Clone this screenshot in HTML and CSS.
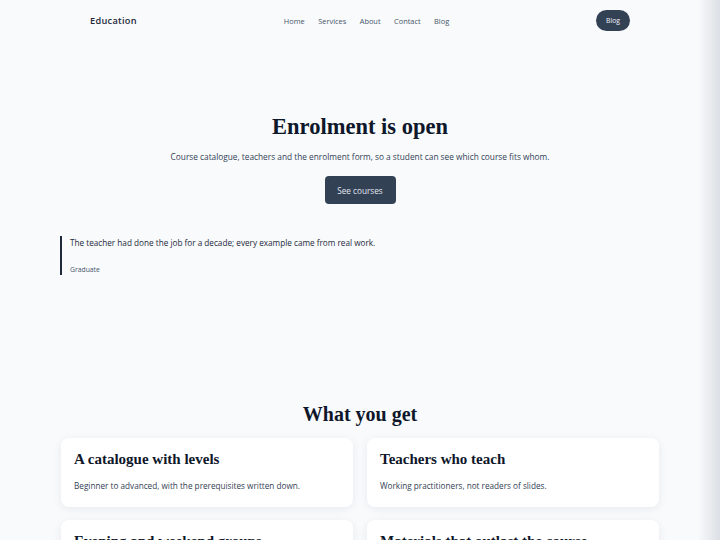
FILE: index.html
```html
<!DOCTYPE html>
<html lang="en">
<head>
<meta charset="utf-8">
<title>Education</title>
<link rel="stylesheet" href="styles.css">
</head>
<body>
<header class="topbar">
  <div class="brand">Education</div>
  <nav class="links">
    <a href="#">Home</a>
    <a href="#">Services</a>
    <a href="#">About</a>
    <a href="#">Contact</a>
    <a href="#">Blog</a>
  </nav>
  <a class="pill" href="#">Blog</a>
</header>

<main>
  <section class="hero">
    <h1>Enrolment is open</h1>
    <p class="lead">Course catalogue, teachers and the enrolment form, so a student can see which course fits whom.</p>
    <a class="btn" href="#">See courses</a>
  </section>

  <section class="wrap">
    <blockquote class="quote">
      <p>The teacher had done the job for a decade; every example came from real work.</p>
      <cite>Graduate</cite>
    </blockquote>
  </section>

  <section class="wrap features">
    <h2>What you get</h2>
    <div class="grid">
      <div class="card">
        <h3>A catalogue with levels</h3>
        <p>Beginner to advanced, with the prerequisites written down.</p>
      </div>
      <div class="card">
        <h3>Teachers who teach</h3>
        <p>Working practitioners, not readers of slides.</p>
      </div>
      <div class="card">
        <h3>Evening and weekend groups</h3>
        <p>Schedules that fit around a working week.</p>
      </div>
      <div class="card">
        <h3>Materials that outlast the course</h3>
        <p>Notes and exercises stay available afterwards.</p>
      </div>
    </div>
  </section>
</main>
<div class="edge"></div>
</body>
</html>
```

FILE: styles.css
```css
* { box-sizing: border-box; }
html, body { margin: 0; padding: 0; }
body {
  background: #f8fafc;
  color: #1e293b;
  font-family: "Open Sans", "Liberation Sans", sans-serif;
  overflow: hidden;
}
a { text-decoration: none; color: inherit; }

.topbar {
  height: 41px;
  padding: 0 90px;
  display: flex;
  align-items: center;
  justify-content: space-between;
}
.brand {
  font-size: 9.2px;
  font-weight: 600;
  letter-spacing: 0.3px;
  color: #1e293b;
}
.links {
  display: flex;
  gap: 13.5px;
  font-size: 7.4px;
  color: #475569;
}
.pill {
  background: #334155;
  color: #f1f5f9;
  font-size: 6.8px;
  height: 21px;
  padding: 0 10px;
  border-radius: 11px;
  display: flex;
  align-items: center;
}

.hero {
  text-align: center;
  padding-top: 71px;
}
h1, h2, h3 {
  font-family: "Liberation Serif", "DejaVu Serif", serif;
  font-weight: 700;
  color: #0f172a;
  margin: 0;
}
h1 { font-size: 22.5px; line-height: 30px; }
.lead {
  margin: 9px 0 0;
  font-size: 8.3px;
  line-height: 12px;
  color: #334155;
}
.btn {
  display: inline-flex;
  align-items: center;
  justify-content: center;
  margin-top: 13px;
  width: 71px;
  height: 28px;
  border-radius: 4px;
  background: #334155;
  color: #e2e8f0;
  font-size: 8.2px;
}

.wrap {
  width: 600px;
  margin: 0 auto;
}
.quote {
  margin: 32px 0 0;
  border-left: 2px solid #1e293b;
  padding: 1px 0 1px 8px;
}
.quote p {
  margin: 0;
  font-size: 8.2px;
  line-height: 12px;
  color: #1e293b;
}
.quote cite {
  display: block;
  margin-top: 16px;
  font-style: normal;
  font-size: 6.8px;
  line-height: 9px;
  color: #475569;
}

.features { padding-top: 126px; }
h2 { text-align: center; font-size: 20px; line-height: 26px; }
.grid {
  margin-top: 11px;
  display: grid;
  grid-template-columns: 1fr 1fr;
  gap: 13px 14px;
  padding: 0 1px;
}
.card {
  background: #ffffff;
  border-radius: 8px;
  padding: 12px 13px 16px;
  box-shadow: 0 2px 10px rgba(15, 23, 42, 0.07);
  height: 69px;
}
h3 { font-size: 15px; line-height: 18px; }
.card p {
  margin: 12px 0 0;
  font-size: 8.2px;
  line-height: 12px;
  color: #334155;
}

.edge {
  position: fixed;
  top: 0;
  right: 0;
  width: 22px;
  height: 100%;
  background: linear-gradient(to right, rgba(148, 156, 170, 0), rgba(148, 156, 170, 0.28));
  pointer-events: none;
}
```
